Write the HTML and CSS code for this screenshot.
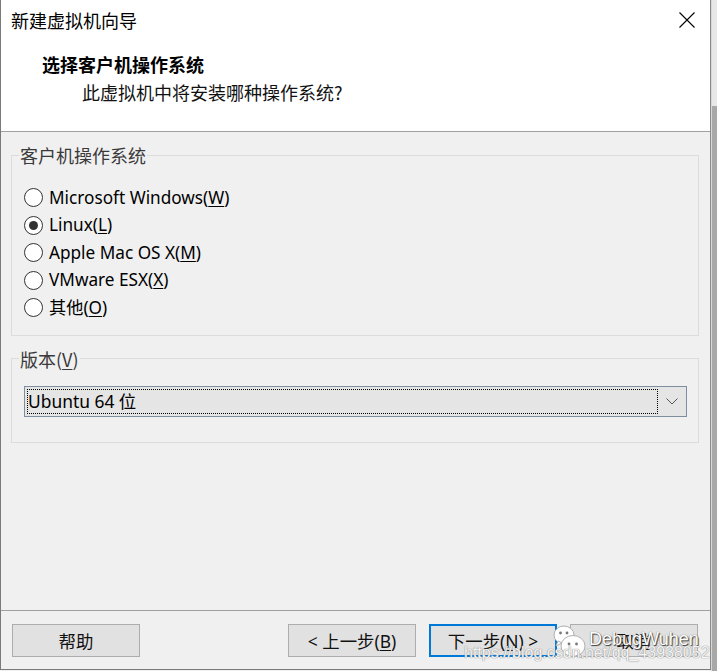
FILE: index.html
```html
<!DOCTYPE html>
<html lang="zh-CN">
<head>
<meta charset="utf-8">
<title>新建虚拟机向导</title>
<link rel="stylesheet" href="styles.css">
</head>
<body>
<div class="screen">
  <div class="dialog">
    <header class="header">
      <div class="titlebar">
        <span class="title">新建虚拟机向导</span>
        <svg class="close" width="16" height="16" viewBox="0 0 16 16"><path d="M0.5 0.5 L15.5 15.5 M15.5 0.5 L0.5 15.5" stroke="#000" stroke-width="1.1" fill="none"/></svg>
      </div>
      <div class="heading">选择客户机操作系统</div>
      <div class="subheading">此虚拟机中将安装哪种操作系统?</div>
    </header>
    <main class="body">
      <fieldset class="group group-os">
        <legend class="legend">客户机操作系统</legend>
        <ul class="radios">
          <li class="radio"><span class="radio-circle"></span><span class="radio-label">Microsoft Windows(<u>W</u>)</span></li>
          <li class="radio"><span class="radio-circle checked"></span><span class="radio-label">Linux(<u>L</u>)</span></li>
          <li class="radio"><span class="radio-circle"></span><span class="radio-label">Apple Mac OS X(<u>M</u>)</span></li>
          <li class="radio"><span class="radio-circle"></span><span class="radio-label">VMware ESX(<u>X</u>)</span></li>
          <li class="radio"><span class="radio-circle"></span><span class="radio-label">其他(<u>O</u>)</span></li>
        </ul>
      </fieldset>
      <fieldset class="group group-ver">
        <legend class="legend">版本(<u>V</u>)</legend>
        <div class="select">
          <div class="select-value">Ubuntu 64 位</div>
          <div class="select-arrow">
            <svg width="12" height="7" viewBox="0 0 12 7"><path d="M0.5 0.5 L6 6 L11.5 0.5" stroke="#555" stroke-width="1" fill="none"/></svg>
          </div>
        </div>
      </fieldset>
    </main>
    <footer class="footer">
      <button class="btn">帮助</button>
      <div class="nav">
        <button class="btn">&lt; 上一步(<u>B</u>)</button>
        <button class="btn btn-primary">下一步(<u>N</u>) &gt;</button>
        <button class="btn">取消</button>
      </div>
      <div class="watermark">
        <svg class="wm-icon" width="36" height="34" viewBox="0 0 36 34">
          <ellipse cx="11" cy="10" rx="10" ry="9" fill="#fff" stroke="#b0b0b0" stroke-width="1"/>
          <path d="M5 16 L3 21 L9 18 Z" fill="#fff" stroke="#b0b0b0" stroke-width="1"/>
          <circle cx="7.5" cy="8" r="1.4" fill="#777"/>
          <circle cx="14" cy="8" r="1.4" fill="#777"/>
          <ellipse cx="20" cy="21" rx="12" ry="10.5" fill="#fff" stroke="#b0b0b0" stroke-width="1"/>
          <path d="M27 29 L30 33 L23 31 Z" fill="#fff" stroke="#b0b0b0" stroke-width="1"/>
          <circle cx="16" cy="19" r="1.4" fill="#777"/>
          <circle cx="23.5" cy="19" r="1.4" fill="#777"/>
        </svg>
        <span class="wm-name">DebugWuhen</span>
        <span class="wm-url">https://blog.csdn.net/qq_43938052</span>
      </div>
    </footer>
  </div>
  <div class="strip">
    <div class="strip-top"></div>
    <div class="strip-bottom"></div>
  </div>
</div>
</body>
</html>
```
FILE: styles.css
```css
* { box-sizing: border-box; }
html, body {
  margin: 0;
  padding: 0;
  background: #f0f0f0;
}
body {
  font-family: "Noto Sans", "Noto Sans CJK SC", sans-serif;
  color: #000;
}
.screen {
  display: flex;
  width: 717px;
  height: 671px;
}
.dialog {
  width: 711px;
  height: 670px;
  display: flex;
  flex-direction: column;
  border-left: 1px solid #7a7a7a;
  border-right: 1px solid #8a8a8a;
  border-bottom: 1px solid #7a7a7a;
  position: relative;
}
.strip {
  width: 6px;
  display: flex;
  flex-direction: column;
  border-left: 1px solid #d8d8d8;
}
.strip-top { height: 106px; background: #e8e8e8; }
.strip-bottom { flex: 1; background: #a8a8a8; }

/* header */
.header {
  height: 132px;
  background: #fff;
  border-bottom: 1px solid #a0a0a0;
  flex: none;
}
.titlebar {
  height: 40px;
  display: flex;
  align-items: center;
  justify-content: space-between;
  padding: 0 15px 0 10px;
}
.title {
  font-family: "Noto Sans CJK SC", sans-serif;
  font-size: 18px;
  line-height: 40px;
}
.close { display: block; margin-top: -1px; }
.heading {
  margin-top: 10px;
  padding-left: 41px;
  font-family: "Noto Sans CJK SC", sans-serif;
  font-size: 18px;
  font-weight: 700;
  line-height: 28px;
}
.subheading {
  padding-left: 81px;
  font-family: "Noto Sans CJK SC", sans-serif;
  font-size: 18px;
  line-height: 28px;
  color: #111;
}

/* body */
.body {
  flex: 1;
  display: flex;
  flex-direction: column;
  padding: 0 11px 0 10px;
}
.group {
  margin: 0;
  padding: 0;
  border: 1px solid #dcdcdc;
  min-inline-size: 0;
}
.group-os { margin-top: 12px; padding-bottom: 13px; }
.group-ver { margin-top: 12px; padding-bottom: 25px; }
.legend {
  margin-left: 7px;
  padding: 0 1px;
  font-family: "Noto Sans CJK SC", sans-serif;
  font-size: 18px;
  line-height: 22px;
  color: #3a3a3a;
}
.legend u, .radio-label u, .btn u { text-underline-offset: 2px; }
.radios {
  list-style: none;
  margin: 0 0 0 12px;
  padding: 18px 0 0 0;
}
.radio {
  height: 27.5px;
  display: flex;
  align-items: center;
  gap: 6px;
}
.radio-circle {
  width: 19px;
  height: 19px;
  border: 1px solid #333;
  border-radius: 50%;
  background: #fff;
  display: flex;
  align-items: center;
  justify-content: center;
  flex: none;
}
.radio-circle.checked::after {
  content: "";
  width: 9px;
  height: 9px;
  border-radius: 50%;
  background: #333;
}
.radio-label {
  font-family: "Noto Sans", "Noto Sans CJK SC", sans-serif;
  font-size: 17.2px;
  line-height: 24px;
}

.select {
  margin: 16px 11px 0 12px;
  height: 31px;
  border: 1px solid #7e8ea0;
  background: #e5e5e5;
  display: flex;
  padding: 2px 0 2px 2px;
}
.select-value {
  flex: 1;
  border: 1px dotted #000;
  font-family: "Noto Sans", "Noto Sans CJK SC", sans-serif;
  font-size: 17.4px;
  line-height: 23px;
  padding-left: 0;
}
.select-arrow {
  width: 28px;
  display: flex;
  align-items: center;
  justify-content: center;
  padding-top: 1px;
}
.select-arrow svg { display: block; }

/* footer */
.footer {
  height: 59px;
  flex: none;
  border-top: 1px solid #a0a0a0;
  display: flex;
  justify-content: space-between;
  align-items: flex-start;
  padding: 13px 12px 0 11px;
  position: relative;
}
.nav { display: flex; gap: 13px; }
.btn {
  width: 128px;
  height: 33px;
  margin: 0;
  padding: 0;
  border: 1px solid #adadad;
  background: #e1e1e1;
  font-family: "Noto Sans", "Noto Sans CJK SC", sans-serif;
  font-size: 17.4px;
  color: #111;
  line-height: 30px;
}
.btn-primary { border: 2px solid #0078d7; }

/* watermark overlay */
.watermark {
  position: absolute;
  left: 0;
  top: 0;
  width: 100%;
  height: 100%;
  pointer-events: none;
}
.wm-icon { position: absolute; left: 552px; top: 14px; }
.wm-name {
  position: absolute;
  left: 588px;
  top: 16px;
  font-family: "Liberation Sans", sans-serif;
  font-size: 18px;
  line-height: 24px;
  color: #fff;
  text-shadow: 1px 1px 1px #3a3a3a, 0 0 1px #555;
}
.wm-url {
  position: absolute;
  left: 463px;
  top: 32px;
  font-family: "Liberation Sans", sans-serif;
  font-size: 16px;
  line-height: 20px;
  color: rgba(255,255,255,0.92);
  text-shadow: 0 0 1px #888, 0 0 1px #999;
}
```
